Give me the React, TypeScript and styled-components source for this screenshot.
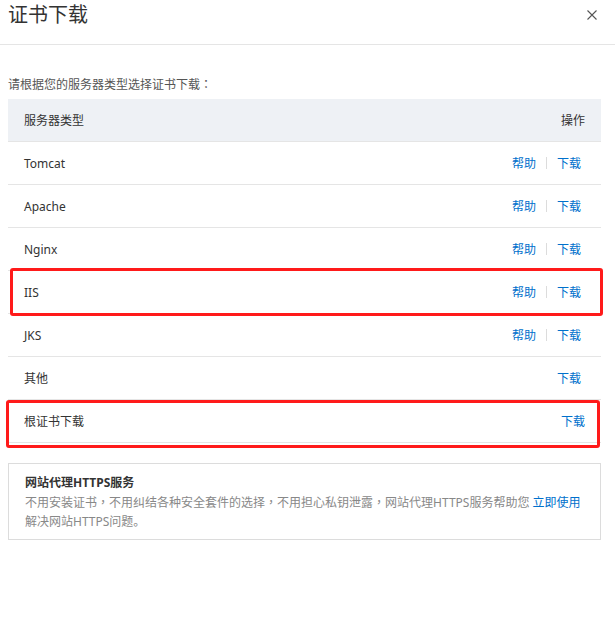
import React from "react";
import styled, { createGlobalStyle } from "styled-components";

const Global = createGlobalStyle`
  html, body { margin: 0; padding: 0; background: #fff; }
  body { font-family: "Noto Sans", "Noto Sans CJK SC", sans-serif; }
`;

const Dialog = styled.div`
  width: 615px;
  background: #fff;
`;

const Header = styled.div`
  height: 44px;
  border-bottom: 1px solid #e5e5e5;
  display: flex;
  justify-content: space-between;
  align-items: flex-start;
  padding: 0 18px 0 8px;
`;

const Title = styled.h1`
  margin: 0;
  font-size: 20px;
  line-height: 30px;
  font-weight: normal;
  color: #333;
`;

const Close = styled.button`
  border: 0;
  background: none;
  padding: 0;
  margin-top: 10px;
  width: 10px;
  height: 10px;
  display: flex;
  cursor: pointer;
`;

const Body = styled.div`
  padding: 31px 14px 0 8px;
`;

const Intro = styled.p`
  margin: 0 0 5px;
  height: 18px;
  font-size: 12px;
  line-height: 18px;
  color: #555;
`;

const Punct = styled.span`
  font-family: "Noto Sans CJK TC", sans-serif;
  line-height: 1;
`;

const Table = styled.div`
  display: flex;
  flex-direction: column;
`;

const Row = styled.div<{ $head?: boolean; $mark?: "a" | "b" }>`
  position: relative;
  z-index: ${(p) => (p.$mark ? 1 : "auto")};
  height: 42px;
  display: flex;
  align-items: center;
  justify-content: space-between;
  padding: 0 16px;
  border-bottom: 1px solid #e5e5e5;
  background: ${(p) => (p.$head ? "#eef1f5" : "#fff")};
  font-size: 12px;
  color: #333;

  ${(p) =>
    p.$mark === "a" &&
    `
    &::after {
      content: "";
      position: absolute;
      left: 2px; right: -2px; top: -3px; bottom: -3px;
      border: 3px solid #ff1a1a;
      border-radius: 3px;
      pointer-events: none;
    }
  `}
  ${(p) =>
    p.$mark === "b" &&
    `
    &::after {
      content: "";
      position: absolute;
      left: -2px; right: 1px; top: 0px; bottom: -6px;
      border: 3px solid #ff1a1a;
      border-radius: 3px;
      pointer-events: none;
    }
  `}
`;

const Ops = styled.div<{ $inset?: boolean }>`
  display: flex;
  align-items: center;
  margin-right: ${(p) => (p.$inset ? "4px" : "0")};
`;

const Link = styled.a`
  color: #0070cc;
  text-decoration: none;
  font-size: 12px;
  cursor: pointer;
`;

const Sep = styled.span`
  width: 1px;
  height: 12px;
  background: #dcdcdc;
  margin: 0 10px;
`;

const Promo = styled.div`
  margin-top: 20px;
  border: 1px solid #dcdcdc;
  padding: 9px 16px 8px;
  font-size: 12px;
  line-height: 20px;
`;

const PromoTitle = styled.div`
  font-weight: bold;
  color: #333;
  height: 20px;
`;

const PromoText = styled.div`
  color: #888;
  line-height: 19px;
`;

const OneLine = styled.span`
  white-space: nowrap;
`;

const rows: { name: string; help: boolean; mark?: "a" | "b" }[] = [
  { name: "Tomcat", help: true },
  { name: "Apache", help: true },
  { name: "Nginx", help: true },
  { name: "IIS", help: true, mark: "a" },
  { name: "JKS", help: true },
  { name: "其他", help: false },
];

export default function App() {
  return (
    <Dialog>
      <Global />
      <Header>
        <Title>证书下载</Title>
        <Close aria-label="关闭">
          <svg width="10" height="10" viewBox="0 0 10 10">
            <path d="M0.5 0.5L9.5 9.5M9.5 0.5L0.5 9.5" stroke="#555" strokeWidth="1.1" fill="none" />
          </svg>
        </Close>
      </Header>
      <Body>
        <Intro>
          请根据您的服务器类型选择证书下载<Punct>：</Punct>
        </Intro>
        <Table>
          <Row $head>
            <span>服务器类型</span>
            <span>操作</span>
          </Row>
          {rows.map((r) => (
            <Row key={r.name} $mark={r.mark}>
              <span>{r.name}</span>
              <Ops $inset>
                {r.help && (
                  <>
                    <Link>帮助</Link>
                    <Sep />
                  </>
                )}
                <Link>下载</Link>
              </Ops>
            </Row>
          ))}
          <Row $mark="b">
            <span>根证书下载</span>
            <Ops>
              <Link>下载</Link>
            </Ops>
          </Row>
        </Table>
        <Promo>
          <PromoTitle>网站代理HTTPS服务</PromoTitle>
          <PromoText>
            <OneLine>
              不用安装证书<Punct>，</Punct>不用纠结各种安全套件的选择<Punct>，</Punct>不用担心私钥泄露<Punct>，</Punct>网站代理HTTPS服务帮助您 <Link>立即使用</Link>
            </OneLine>
            <br />
            解决网站HTTPS问题。
          </PromoText>
        </Promo>
      </Body>
    </Dialog>
  );
}
